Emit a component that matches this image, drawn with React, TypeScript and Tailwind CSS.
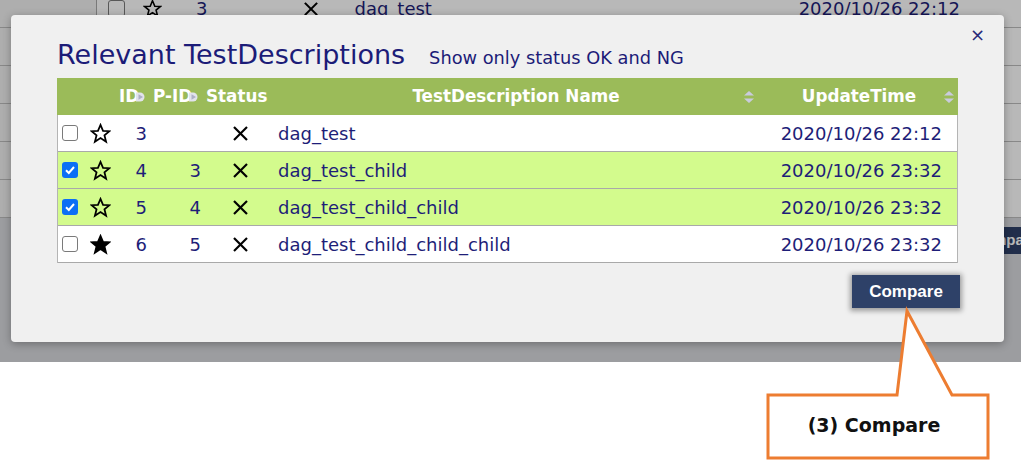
import React from "react";

type Row = { id: string; pid: string; name: string; time: string; checked: boolean; filled: boolean };

const rows: Row[] = [
  { id: "3", pid: "", name: "dag_test", time: "2020/10/26 22:12", checked: false, filled: false },
  { id: "4", pid: "3", name: "dag_test_child", time: "2020/10/26 23:32", checked: true, filled: false },
  { id: "5", pid: "4", name: "dag_test_child_child", time: "2020/10/26 23:32", checked: true, filled: false },
  { id: "6", pid: "5", name: "dag_test_child_child_child", time: "2020/10/26 23:32", checked: false, filled: true },
];

function Star({ filled, size = 21 }: { filled: boolean; size?: number }) {
  return (
    <svg width={size} height={size} viewBox="0 0 24 24">
      <polygon
        points="12,2.2 14.9,9.1 22.2,9.4 16.5,14.1 18.4,21.4 12,17.3 5.6,21.4 7.5,14.1 1.8,9.4 9.1,9.1"
        fill={filled ? "#000" : "none"}
        stroke="#000"
        strokeWidth="2"
        strokeLinejoin="miter"
      />
    </svg>
  );
}

function Cross({ size = 17 }: { size?: number }) {
  return (
    <svg width={size} height={size} viewBox="0 0 17 17">
      <line x1="2" y1="2" x2="15" y2="15" stroke="#000" strokeWidth="2.2" />
      <line x1="15" y1="2" x2="2" y2="15" stroke="#000" strokeWidth="2.2" />
    </svg>
  );
}

function Check({ checked }: { checked: boolean }) {
  return checked ? (
    <span className="flex h-[16px] w-[16px] items-center justify-center rounded-[3px] bg-[#0b6ff5]">
      <svg width="12" height="12" viewBox="0 0 12 12">
        <polyline points="2,6.3 4.8,9 10,3" fill="none" stroke="#fff" strokeWidth="2" />
      </svg>
    </span>
  ) : (
    <span className="block h-[16px] w-[16px] rounded-[3px] border border-[#7a7a7a] bg-white" />
  );
}

function SortBoth() {
  return (
    <svg width="10" height="12" viewBox="0 0 10 12">
      <polygon points="5,0 10,4.5 0,4.5" fill="#c9cbdd" />
      <polygon points="5,12 10,7.5 0,7.5" fill="#c9cbdd" />
    </svg>
  );
}

function SortSmall() {
  return (
    <svg width="10" height="12" viewBox="0 0 10 12">
      <path d="M1,1.5 L5,1.5 A4.5,4.5 0 0 1 9.5,6 A4.5,4.5 0 0 1 5,10.5 L1,10.5 Z" fill="#e2e3ec" />
      <polygon points="3.5,3.2 8,6 3.5,8.8" fill="#aeb1c6" />
    </svg>
  );
}

export default function App() {
  return (
    <div className="relative h-[462px] w-[1021px] overflow-hidden bg-white font-['DejaVu_Sans',sans-serif]">
      {/* underlying page */}
      <div className="relative h-[362px] overflow-hidden bg-[#d9dade]">
        <div className="-mt-[10px] bg-white">
          {[0, 1, 2, 3, 4, 5].map((i) => (
            <div key={i} className="flex h-[38px] items-center border-b border-[#bdbdbd] text-[18px] text-[#1e1e78]">
              <div className="h-full w-[97px] border-r border-[#a8a8a8] bg-[#f2f2f2]" />
              {i === 0 && (
                <>
                  <span className="ml-[11px] block h-[17px] w-[17px] rounded-[3px] border border-[#7a7a7a] bg-white" />
                  <span className="ml-[18px]">
                    <Star filled={false} size={19} />
                  </span>
                  <span className="ml-[34px]">3</span>
                  <span className="ml-[96px]">
                    <Cross size={16} />
                  </span>
                  <span className="ml-[35px]">dag_test</span>
                  <span className="ml-auto mr-[61px]">2020/10/26 22:12</span>
                </>
              )}
            </div>
          ))}
        </div>
        <div className="mt-[9px] flex justify-end">
          <div className="mr-[-40px] flex h-[27px] w-[100px] items-center bg-[#2e4168] pl-[12px] font-['Liberation_Sans',sans-serif] text-[15px] font-bold text-white">
            Compare
          </div>
        </div>

        {/* overlay */}
        <div className="absolute inset-0 bg-[rgba(0,0,0,0.28)]" />

        {/* modal */}
        <div className="absolute left-[11px] top-[15px] h-[327px] w-[993px] rounded-[4px] bg-[#f0f0f0] pl-[46px] pr-[44px] pt-[24px] shadow-[0_2px_8px_rgba(0,0,0,0.3)]">
          <div className="absolute right-[19px] top-[11px] text-[18px] leading-none text-[#2a2a7a]">×</div>

          <div className="flex h-[32px] items-baseline text-[#1c1c78]">
            <span className="text-[27px] leading-[32px]">Relevant TestDescriptions</span>
            <span className="ml-[24px] text-[17.8px]">Show only status OK and NG</span>
          </div>

          <div className="mt-[7px] w-[901px]">
            {/* header */}
            <div className="flex h-[37px] items-center bg-[#9bbb59] text-[16.8px] font-bold text-white">
              <div className="w-[27px]" />
              <div className="w-[30px]" />
              <div className="flex w-[36px] items-center pl-[5px]">
                <span>ID</span>
                <span className="-ml-[4px] mt-[1px]">
                  <SortSmall />
                </span>
              </div>
              <div className="flex w-[54px] items-center pl-[3px]">
                <span>P-ID</span>
                <span className="-ml-[4px] mt-[1px]">
                  <SortSmall />
                </span>
              </div>
              <div className="w-[68px] pl-[2px]">Status</div>
              <div className="relative flex w-[488px] items-center justify-center">
                <span>TestDescription Name</span>
                <span className="absolute right-[6px] top-1/2 -translate-y-1/2">
                  <SortBoth />
                </span>
              </div>
              <div className="relative flex w-[198px] items-center justify-center">
                <span>UpdateTime</span>
                <span className="absolute right-[4px] top-1/2 -translate-y-1/2">
                  <SortBoth />
                </span>
              </div>
            </div>

            {/* body */}
            <div className="border-x border-[#b4b4b4]">
              {rows.map((r) => (
                <div
                  key={r.id}
                  className={`flex h-[37px] items-center border-b border-[#a9a9a9] text-[18px] text-[#1e1e78] ${
                    r.checked ? "bg-[#d3fb8d]" : "bg-white"
                  }`}
                >
                  <div className="flex w-[26px] justify-start pl-[4px]">
                    <Check checked={r.checked} />
                  </div>
                  <div className="flex w-[30px] justify-center pl-[2px]">
                    <Star filled={r.filled} />
                  </div>
                  <div className="w-[36px] pr-[3px] text-right">{r.id}</div>
                  <div className="w-[54px] pr-[3px] text-right">{r.pid}</div>
                  <div className="flex w-[68px] justify-center">
                    <span className="ml-[4px]">
                      <Cross />
                    </span>
                  </div>
                  <div className="w-[488px] pl-[6px]">{r.name}</div>
                  <div className="w-[197px] pr-[15px] text-right">{r.time}</div>
                </div>
              ))}
            </div>
          </div>

          <div className="mt-[12px] flex justify-end">
            <div className="flex h-[33px] w-[108px] items-center justify-center bg-[#2e4168] font-['Liberation_Sans',sans-serif] text-[17px] font-bold text-white shadow-[0_1px_5px_2px_rgba(0,0,0,0.35)]">
              Compare
            </div>
          </div>
        </div>
      </div>

      {/* callout */}
      <svg className="absolute left-0 top-0" width="1021" height="462">
        <path
          d="M768,395 L897,395 L907,311 L952,395 L988,395 L988,458 L768,458 Z"
          fill="#fff"
          stroke="#ed7d31"
          strokeWidth="3"
          strokeLinejoin="miter"
        />
      </svg>
      <div className="absolute left-[766px] top-[411px] w-[216px] text-center text-[19px] font-bold text-[#111]">
        (3) Compare
      </div>
    </div>
  );
}
